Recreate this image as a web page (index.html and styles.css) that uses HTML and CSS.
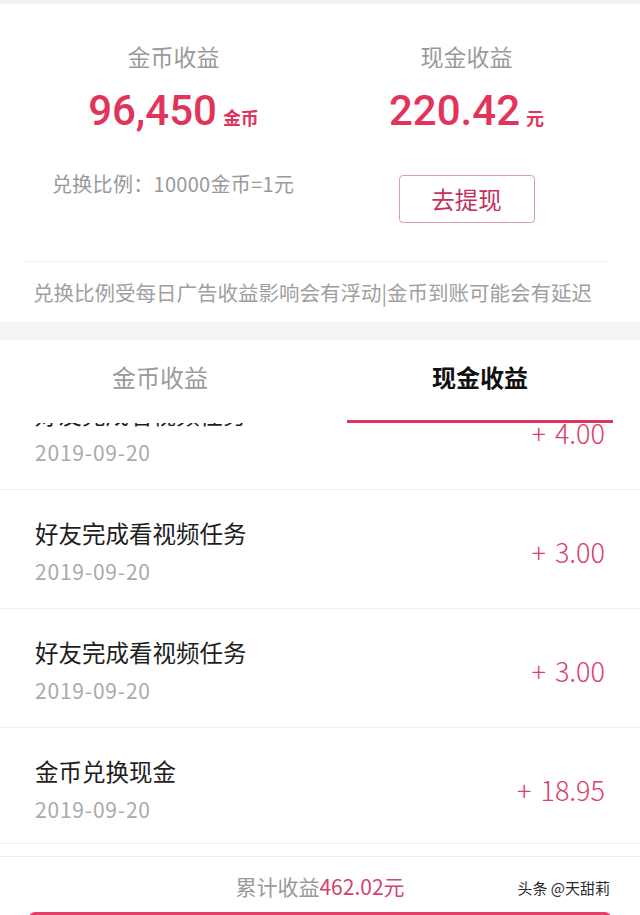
FILE: index.html
```html
<!DOCTYPE html>
<html lang="zh">
<head>
    <meta charset="UTF-8">
    <meta name="viewport" content="width=device-width, initial-scale=1.0">
    <title>我的收益</title>
    <link rel="stylesheet" href="styles.css">
</head>
<body>
    <div class="page">
        <div class="summary">
            <div class="summary-grid">
                <div class="summary-col">
                    <div class="summary-label">金币收益</div>
                    <div class="summary-value">96,450<span class="unit">金币</span></div>
                </div>
                <div class="summary-col">
                    <div class="summary-label">现金收益</div>
                    <div class="summary-value">220.42<span class="unit">元</span></div>
                </div>
                <div class="rate">兑换比例：10000金币=1元</div>
                <div class="summary-col">
                    <button class="withdraw-btn">去提现</button>
                </div>
            </div>
            <div class="notice">兑换比例受每日广告收益影响会有浮动|金币到账可能会有延迟</div>
        </div>

        <div class="tabs">
            <div class="tab">金币收益</div>
            <div class="tab active">现金收益</div>
        </div>

        <div class="record-list" id="record-list">
            <div class="record">
                <div class="record-info">
                    <div class="record-title">好友完成看视频任务</div>
                    <div class="record-date">2019-09-20</div>
                </div>
                <div class="record-amount">+ 4.00</div>
            </div>
            <div class="record">
                <div class="record-info">
                    <div class="record-title">好友完成看视频任务</div>
                    <div class="record-date">2019-09-20</div>
                </div>
                <div class="record-amount">+ 3.00</div>
            </div>
            <div class="record">
                <div class="record-info">
                    <div class="record-title">好友完成看视频任务</div>
                    <div class="record-date">2019-09-20</div>
                </div>
                <div class="record-amount">+ 3.00</div>
            </div>
            <div class="record">
                <div class="record-info">
                    <div class="record-title">金币兑换现金</div>
                    <div class="record-date">2019-09-20</div>
                </div>
                <div class="record-amount">+ 18.95</div>
            </div>
            <div class="record">
                <div class="record-info">
                    <div class="record-title">金币兑换现金</div>
                    <div class="record-date">2019-09-19</div>
                </div>
                <div class="record-amount">+ 20.00</div>
            </div>
        </div>

        <div class="footer">
            <div class="total">累计收益<span class="total-num">462.02元</span></div>
            <div class="footer-btn"></div>
        </div>

        <div class="watermark">头条 @天甜莉</div>
    </div>
    <script>
    // the list is already scrolled a bit, as in the screenshot
    document.getElementById('record-list').scrollTop = 52;
    </script>
</body>
</html>
```

FILE: styles.css
```css
body {
    margin: 0;
    background-color: #ffffff;
    font-family: "Noto Sans CJK SC", "Noto Sans", sans-serif;
    color: #222;
}

.page {
    position: relative;
    width: 640px;
    height: 915px;
    overflow: hidden;
    display: flex;
    flex-direction: column;
}

.summary {
    flex-shrink: 0;
    border-top: 4px solid #f2f2f2;
    border-bottom: 18px solid #f4f4f4;
}

    .summary-grid {
        display: grid;
        grid-template-columns: 293px 293px;
        padding: 36px 27px 0 27px;
    }

    .summary-col {
        display: flex;
        flex-direction: column;
        align-items: center;
    }

    .summary-label {
        font-size: 23px;
        line-height: 32px;
        color: #9a9a9a;
    }

    .summary-value {
        margin-top: 15px;
        font-family: Roboto, "Noto Sans CJK SC", sans-serif;
        font-size: 42px;
        line-height: 48px;
        font-weight: 500;
        color: #e2345a;
    }

        .summary-value .unit {
            font-family: "Noto Sans CJK SC", sans-serif;
            font-weight: 700;
            font-size: 18px;
            margin-left: 6px;
        }

    .rate {
        margin-top: 30px;
        padding-left: 25px;
        font-size: 20px;
        line-height: 26px;
        letter-spacing: 0.3px;
        color: #999;
    }

    .withdraw-btn {
        margin-top: 34px;
        width: 136px;
        height: 48px;
        border: 1px solid #d3a1ae;
        border-radius: 4px;
        background-color: #fff;
        color: #c2325c;
        font-family: inherit;
        font-size: 23.5px;
        padding: 0;
    }

    .notice {
        margin: 38px 32px 0 24px;
        border-top: 1px solid #f0f0f0;
        padding: 15px 0 15px 9px;
        font-size: 20.5px;
        line-height: 30px;
        color: #a0a0a0;
        white-space: nowrap;
    }

.tabs {
    flex-shrink: 0;
    display: grid;
    grid-template-columns: 1fr 1fr;
    background-color: #fff;
}

    .tab {
        margin: 0 27px;
        padding: 21px 0 27px 0;
        text-align: center;
        font-size: 24px;
        line-height: 32px;
        color: #9a9a9a;
        border-bottom: 3px solid transparent;
    }

        .tab.active {
            color: #111;
            font-weight: 700;
            border-bottom-color: #e2345a;
        }

.record-list {
    flex: 1 1 auto;
    min-height: 0;
    overflow: hidden;
    border-bottom: 1px solid #f2f2f2;
}

    .record {
        display: flex;
        align-items: center;
        justify-content: space-between;
        padding: 0 35px;
        height: 118px;
        border-bottom: 1px solid #efefef;
    }

    .record-title {
        font-size: 23.5px;
        line-height: 30px;
        color: #1e1e1e;
        margin-top: 3px;
    }

    .record-date {
        margin-top: 10px;
        font-size: 21px;
        line-height: 26px;
        letter-spacing: 0.8px;
        color: #aaa;
    }

    .record-amount {
        font-size: 27px;
        font-weight: 300;
        color: #d9406a;
        margin-top: 4px;
        word-spacing: 3px;
    }

.footer {
    flex-shrink: 0;
    height: 58px;
    overflow: hidden;
    margin-top: 12px;
    border-top: 1px solid #ececec;
    display: flex;
    flex-direction: column;
    align-items: center;
}

    .total {
        margin-top: 15px;
        font-size: 21px;
        line-height: 28px;
        color: #9a9a9a;
    }

    .total-num {
        color: #d4426e;
    }

    .footer-btn {
        flex-shrink: 0;
        margin-top: 12px;
        width: 582px;
        height: 40px;
        border-radius: 6px;
        background-color: #e2406a;
    }

.watermark {
    position: absolute;
    right: 30px;
    bottom: 17px;
    font-size: 15px;
    color: #2a2a2a;
    text-shadow: 0 0 2px #fff, 0 0 2px #fff;
}
```
